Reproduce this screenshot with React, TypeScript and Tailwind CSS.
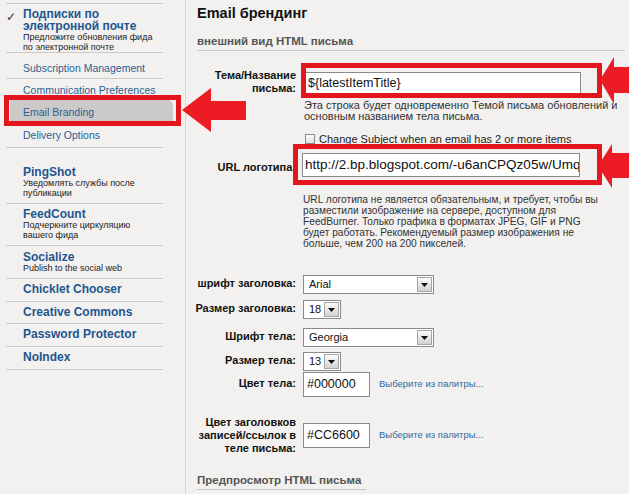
import React from 'react';

// sidebar row with the usual grey divider underneath
function SideItem({
  title,
  desc,
  className = '',
}: {
  title: string;
  desc?: string[];
  className?: string;
}) {
  return (
    <div className={`border-b border-[#cbc9c5] pl-[17px] ${className}`}>
      <div className="text-[12px] font-bold leading-[12px] text-[#1f5690]">{title}</div>
      {desc &&
        desc.map((d) => (
          <div key={d} className="whitespace-nowrap text-[9px] leading-[10px] text-[#222]">
            {d}
          </div>
        ))}
    </div>
  );
}

function SubLink({ label, className = '' }: { label: string; className?: string }) {
  return (
    <div className={`pl-[17px] text-[10.5px] leading-[12px] text-[#2b5f93] ${className}`}>{label}</div>
  );
}

function Select({ value, width }: { value: string; width: string }) {
  return (
    <div className={`flex h-[19px] items-center border border-[#8a8a8a] bg-white ${width}`}>
      <span className="flex-1 pl-[5px] text-[11px] leading-none text-[#111]">{value}</span>
      <span className="mr-[1px] flex h-[15px] w-[15px] items-center justify-center border border-[#a5a5a5] bg-gradient-to-b from-[#fbfbfb] to-[#d2d2d2]">
        <svg width="7" height="4" viewBox="0 0 7 4">
          <path d="M0 0h7L3.5 4z" fill="#111" />
        </svg>
      </span>
    </div>
  );
}

function Label({ children, className = '' }: { children: React.ReactNode; className?: string }) {
  return (
    <div className={`w-[110px] shrink-0 text-right text-[11px] font-bold leading-[13px] text-[#111] ${className}`}>
      {children}
    </div>
  );
}

export default function App() {
  return (
    <div className="relative flex h-[494px] w-[629px] overflow-hidden bg-[#f2f1ef] font-['Liberation_Sans',Arial,sans-serif] text-[#222]">
      {/* sidebar */}
      <aside className="w-[186px] shrink-0 border-r border-[#d9d7d3] pl-[6px] pt-[3px]">
        <div className="w-[157px]">
          <div className="flex h-[50px] border-y border-[#cbc9c5] pt-[5px]">
            <span className="w-[17px] pt-[2px] text-[12px] leading-[12px] text-[#333]">✓</span>
            <div>
              <div className="text-[12px] font-bold leading-[11.5px] text-[#1f5690]">
                Подписки по
                <br />
                электронной почте
              </div>
              <div className="whitespace-nowrap text-[9px] leading-[10px] text-[#222]">
                Предложите обновления фида
                <br />
                по электронной почте
              </div>
            </div>
          </div>
          <SubLink label="Subscription Management" className="h-[26px] border-b border-[#cbc9c5] pt-[9px]" />
          <SubLink label="Communication Preferences" className="h-[20px] pt-[5px]" />
          <div className="ml-[4px] h-[25px] w-[163px] rounded-tr-[8px] bg-[#cbcac8] pl-[13px] pt-[7px] text-[10.5px] leading-[12px] text-[#2b5f93]">
            Email Branding
          </div>
          <SubLink label="Delivery Options" className="h-[24px] border-b border-[#cbc9c5] pt-[5px]" />

          <SideItem title="PingShot" desc={['Уведомлять службы после', 'публикации']} className="h-[56px] pt-[18px]" />
          <SideItem title="FeedCount" desc={['Подчеркните циркуляцию', 'вашего фида']} className="h-[42px] pt-[4px]" />
          <SideItem title="Socialize" desc={['Publish to the social web']} className="h-[33px] pt-[5px]" />
          <SideItem title="Chicklet Chooser" className="h-[23px] pt-[4px]" />
          <SideItem title="Creative Commons" className="h-[22px] pt-[4px]" />
          <SideItem title="Password Protector" className="h-[23px] pt-[4px]" />
          <SideItem title="NoIndex" className="h-[23px] pt-[4px]" />
        </div>
      </aside>

      {/* main form */}
      <main className="flex-1 pt-[4px]">
        <h1 className="pl-[11px] text-[14.5px] font-bold leading-[18px] text-[#111]">Email брендинг</h1>
        <div className="ml-[11px] mr-[4px] mt-[12px] border-b border-[#c9c7c3] pb-[2px] text-[11.5px] font-bold leading-[14px] text-[#555]">
          внешний вид HTML письма
        </div>

        <div className="mt-[18px] flex">
          <Label>
            Тема/Название
            <br />
            письма:
          </Label>
          <div className="ml-[9px] mt-[3px] flex h-[22px] w-[276px] items-center border border-[#8a8a8a] bg-white pl-[2px] text-[12.5px] text-[#111]">
            {'${latestItemTitle}'}
          </div>
        </div>
        <p className="ml-[118px] mt-[5px] whitespace-nowrap text-[11px] leading-[11px] text-[#333]">
          Эта строка будет одновременно Темой письма обновлений и
          <br />
          основным названием тела письма.
        </p>

        <div className="ml-[119px] mt-[11px] flex h-[12px] items-center">
          <span className="h-[10px] w-[10px] border border-[#8a8a8a] bg-gradient-to-b from-[#ffffff] to-[#dcdcdc]" />
          <span className="ml-[4px] text-[11px] leading-none text-[#222]">Change Subject when an email has 2 or more items</span>
        </div>

        <div className="mt-[8px] flex h-[24px] items-center">
          <Label className="mt-[4px]">URL логотипа:</Label>
          <div className="ml-[6px] flex h-[24px] w-[278px] items-center overflow-hidden whitespace-nowrap border border-[#8a8a8a] bg-white pl-[2px] text-[13.5px] text-[#111]">
            http://2.bp.blogspot.com/-u6anCPQz05w/UmqhQzQ
          </div>
        </div>
        <p className="ml-[117px] mt-[17px] whitespace-nowrap text-[10.2px] leading-[11px] text-[#333]">
          URL логотипа не является обязательным, и требует, чтобы вы
          <br />
          разместили изображение на сервере, доступном для
          <br />
          FeedBurner. Только графика в форматах JPEG, GIF и PNG
          <br />
          будет работать. Рекомендуемый размер изображения не
          <br />
          больше, чем 200 на 200 пикселей.
        </p>

        <div className="mt-[26px] flex items-center">
          <Label className="-mt-[3px]">шрифт заголовка:</Label>
          <div className="ml-[7px]">
            <Select value="Arial" width="w-[131px]" />
          </div>
        </div>
        <div className="mt-[6px] flex items-center">
          <Label className="-mt-[3px]">Размер заголовка:</Label>
          <div className="ml-[7px]">
            <Select value="18" width="w-[38px]" />
          </div>
        </div>
        <div className="mt-[9px] flex items-center">
          <Label className="-mt-[3px]">Шрифт тела:</Label>
          <div className="ml-[7px]">
            <Select value="Georgia" width="w-[131px]" />
          </div>
        </div>
        <div className="mt-[5px] flex items-center">
          <Label className="-mt-[3px]">Размер тела:</Label>
          <div className="ml-[7px]">
            <Select value="13" width="w-[38px]" />
          </div>
        </div>

        <div className="mt-[1px] flex items-center">
          <Label className="-mt-[2px]">Цвет тела:</Label>
          <div className="ml-[7px] flex h-[25px] w-[67px] items-center border border-[#8a8a8a] bg-white pl-[3px] text-[12.5px] text-[#111]">
            #000000
          </div>
          <span className="ml-[9px] text-[9.5px] text-[#2e6a9e]">Выберите из палитры...</span>
        </div>
        <div className="mt-[19px] flex items-center">
          <Label className="leading-[12.5px]">
            Цвет заголовков
            <br />
            записей/ссылок в
            <br />
            теле письма:
          </Label>
          <div className="ml-[7px] flex h-[25px] w-[67px] items-center border border-[#8a8a8a] bg-white pl-[3px] text-[12.5px] text-[#111]">
            #CC6600
          </div>
          <span className="ml-[9px] text-[9.5px] text-[#2e6a9e]">Выберите из палитры...</span>
        </div>

        <div className="ml-[11px] mt-[18px] inline-block border-b border-[#c9c7c3] pb-[2px] pr-[5px] text-[11.5px] font-bold leading-[14px] text-[#555]">
          Предпросмотр HTML письма
        </div>
      </main>

      {/* red annotation boxes */}
      <div className="pointer-events-none absolute left-[4px] top-[95px] h-[31px] w-[177px] border-[5px] border-[#e3151d]" />
      <div className="pointer-events-none absolute left-[301px] top-[63px] h-[35px] w-[301px] border-[5px] border-[#e3151d]" />
      <div className="pointer-events-none absolute left-[293px] top-[144px] h-[41px] w-[309px] border-[5px] border-[#e3151d]" />

      {/* red arrows */}
      <svg className="pointer-events-none absolute left-0 top-0" width="629" height="494" viewBox="0 0 629 494">
        <polygon points="182,110 211,88 211,101 246,101 246,120 211,120 211,132" fill="#ec1b24" />
        <polygon points="600,80 614,57 614,67 629,67 629,93 614,93 614,104" fill="#ec1b24" />
        <polygon points="598,166 612,144 612,153 629,153 629,178 612,178 612,188" fill="#ec1b24" />
      </svg>
    </div>
  );
}
